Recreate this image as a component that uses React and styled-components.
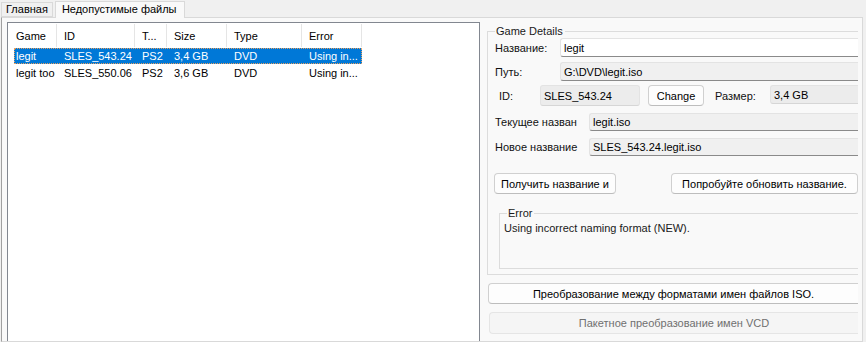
import styled, { createGlobalStyle } from "styled-components";

const GlobalStyle = createGlobalStyle`
  html, body {
    margin: 0;
    padding: 0;
    background: #f0f0f0;
  }
  body {
    font-family: "Liberation Sans", Arial, sans-serif;
    font-size: 11px;
    color: #000;
  }
`;

const columns = [
  { title: "Game", width: 49 },
  { title: "ID", width: 78 },
  { title: "T...", width: 32 },
  { title: "Size", width: 60 },
  { title: "Type", width: 75 },
  { title: "Error", width: 60 },
];

const games = [
  ["legit", "SLES_543.24", "PS2", "3,4 GB", "DVD", "Using in..."],
  ["legit too", "SLES_550.06", "PS2", "3,6 GB", "DVD", "Using in..."],
];

const App = () => {
  return (
    <Window>
      <GlobalStyle />
      <TabStrip>
        <Tab>Главная</Tab>
        <Tab $active>Недопустимые файлы</Tab>
      </TabStrip>
      <TabPanel>
        <ListView>
          <HeaderRow>
            {columns.map((c) => (
              <HeaderCell key={c.title} $width={c.width}>
                {c.title}
              </HeaderCell>
            ))}
          </HeaderRow>
          {games.map((g, i) => (
            <ItemRow key={g[1]} $selected={i === 0}>
              {g.map((v, j) => (
                <ItemCell key={j} $width={j === 0 ? 43 : columns[j].width} $first={j === 0}>
                  {v}
                </ItemCell>
              ))}
            </ItemRow>
          ))}
        </ListView>

        <Side>
          <GroupBox>
            <Legend $offset={1}>Game Details</Legend>
            <FieldRow $h={19}>
              <Label $width={66}>Название:</Label>
              <Field $white>legit</Field>
            </FieldRow>
            <FieldRow $h={19} $top={5}>
              <Label $width={66}>Путь:</Label>
              <Field>G:\DVD\legit.iso</Field>
            </FieldRow>
            <FieldRow $h={21} $top={4}>
              <Label $width={46} $pad={4}>ID:</Label>
              <Field $width={100} $plain>SLES_543.24</Field>
              <Button $width={56} $left={8}>Change</Button>
              <Label $width={66} $pad={10}>Размер:</Label>
              <Field $plain $top>3,4 GB</Field>
            </FieldRow>
            <FieldRow $h={18} $top={7}>
              <Label $width={95}>Текущее назван</Label>
              <Field>legit.iso</Field>
            </FieldRow>
            <FieldRow $h={18} $top={7}>
              <Label $width={95}>Новое название</Label>
              <Field>SLES_543.24.legit.iso</Field>
            </FieldRow>
            <ButtonRow>
              <Button $width={122}>Получить название и</Button>
              <Button $width={187}>Попробуйте обновить название.</Button>
            </ButtonRow>
            <ErrorBox>
              <Legend $offset={3}>Error</Legend>
              <ErrorText>Using incorrect naming format (NEW).</ErrorText>
            </ErrorBox>
          </GroupBox>
          <WideButton>Преобразование между форматами имен файлов ISO.</WideButton>
          <WideButton disabled>Пакетное преобразование имен VCD</WideButton>
        </Side>
      </TabPanel>
    </Window>
  );
};

const Window = styled.div`
  width: 866px;
  height: 342px;
  overflow: hidden;
  display: flex;
  flex-direction: column;
`;

const TabStrip = styled.div`
  height: 17px;
  display: flex;
  align-items: flex-end;
  padding-left: 1px;
  gap: 2px;
`;

const Tab = styled.div`
  position: relative;
  z-index: 1;
  box-sizing: border-box;
  height: ${(p) => (p.$active ? "17px" : "15px")};
  margin-bottom: ${(p) => (p.$active ? "-1px" : "0")};
  padding: ${(p) => (p.$active ? "1px 7px 0 6px" : "0 4px 0 4px")};
  background: ${(p) => (p.$active ? "#f9f9f9" : "#f0f0f0")};
  border: 1px solid #d9d9d9;
  border-bottom: ${(p) => (p.$active ? "none" : "1px solid #d9d9d9")};
  line-height: 13px;
  white-space: nowrap;
`;

const TabPanel = styled.div`
  flex: 1;
  display: flex;
  align-items: flex-start;
  width: 862px;
  margin-left: 1px;
  box-sizing: border-box;
  background: #f9f9f9;
  border: 1px solid #d9d9d9;
  border-left-color: #a0a0a0;
  padding: 4px 4px 0 5px;
  gap: 7px;
  overflow: hidden;
`;

const ListView = styled.div`
  width: 473px;
  height: 340px;
  flex-shrink: 0;
  box-sizing: border-box;
  background: #fff;
  border: 1px solid #828790;
`;

const HeaderRow = styled.div`
  display: flex;
  height: 23px;
  margin: 1px 0 1px;
`;

const HeaderCell = styled.div`
  width: ${(p) => p.$width}px;
  box-sizing: border-box;
  padding-left: ${(p) => (p.$width === 49 ? 8 : 7)}px;
  border-right: 1px solid #e5e5e5;
  display: flex;
  align-items: center;
  padding-top: 1px;
  white-space: nowrap;
  overflow: hidden;
`;

const ItemRow = styled.div`
  display: flex;
  height: 16px;
  margin: 0 0 1px 6px;
  width: fit-content;
  box-sizing: border-box;
  background: ${(p) => (p.$selected ? "#0078d7" : "transparent")};
  color: ${(p) => (p.$selected ? "#fff" : "#000")};
  outline: ${(p) => (p.$selected ? "1px dotted #e8a060" : "none")};
  outline-offset: -1px;
`;

const ItemCell = styled.div`
  width: ${(p) => p.$width}px;
  box-sizing: border-box;
  padding-left: ${(p) => (p.$first ? 2 : 7)}px;
  line-height: 16px;
  white-space: nowrap;
  overflow: hidden;
`;

const Side = styled.div`
  width: 371px;
  flex-shrink: 0;
  display: flex;
  flex-direction: column;
  overflow: hidden;
`;

const GroupBox = styled.fieldset`
  margin: 3px 0 0;
  min-width: 0;
  padding: 0 0 5px 6px;
  border: 1px solid #dcdcdc;
  border-right: none;
  display: flex;
  flex-direction: column;
`;

const Legend = styled.legend`
  margin-left: ${(p) => p.$offset}px;
  padding: 0 2px 0 1px;
  line-height: 13px;
  color: #1a1a1a;
`;

const FieldRow = styled.div`
  display: flex;
  align-items: center;
  height: ${(p) => p.$h}px;
  margin-top: ${(p) => p.$top || 0}px;
`;

const Label = styled.div`
  width: ${(p) => p.$width}px;
  flex-shrink: 0;
  box-sizing: border-box;
  padding-left: ${(p) => 1 + (p.$pad || 0)}px;
  white-space: nowrap;
  overflow: hidden;
  color: #111;
`;

const Field = styled.div`
  ${(p) => (p.$width ? `width: ${p.$width}px; flex-shrink: 0;` : "flex: 1;")}
  align-self: ${(p) => (p.$top ? "flex-start" : "stretch")};
  height: ${(p) => (p.$top ? "19px" : "auto")};
  box-sizing: border-box;
  display: flex;
  align-items: center;
  padding: 0 3px;
  background: ${(p) => (p.$white ? "#fff" : p.$plain ? "#ececec" : "#f0f0f0")};
  border: 1px solid #e3e3e3;
  border-bottom-color: ${(p) => (p.$plain ? "#d6d6d6" : "#8a8a8a")};
  border-right: ${(p) => (p.$width ? "1px solid #e3e3e3" : "none")};
  border-radius: ${(p) => (p.$width ? "3px" : "3px 0 0 3px")};
  white-space: nowrap;
  overflow: hidden;
`;

const Button = styled.button`
  width: ${(p) => p.$width}px;
  flex-shrink: 0;
  height: 21px;
  margin-left: ${(p) => p.$left || 0}px;
  padding: 0;
  font: inherit;
  color: #000;
  background: #fdfdfd;
  border: 1px solid #d0d0d0;
  border-bottom-color: #bdbdbd;
  border-radius: 4px;
  white-space: nowrap;
  overflow: hidden;
`;

const ButtonRow = styled.div`
  display: flex;
  justify-content: space-between;
  margin-top: 17px;
`;

const ErrorBox = styled.fieldset`
  margin: 13px 0 0 5px;
  min-width: 0;
  padding: 2px 0 0 4px;
  border: 1px solid #dcdcdc;
  border-right: none;
`;

const ErrorText = styled.div`
  height: 46px;
  line-height: 13px;
  color: #1a1a1a;
`;

const WideButton = styled.button`
  height: ${(p) => (p.disabled ? 22 : 21)}px;
  margin: 8px 0 0 ${(p) => (p.disabled ? 2 : 1)}px;
  padding: 0;
  font: inherit;
  color: ${(p) => (p.disabled ? "#707070" : "#000")};
  background: ${(p) => (p.disabled ? "#f5f5f5" : "#fdfdfd")};
  border: 1px solid ${(p) => (p.disabled ? "#e5e5e5" : "#d0d0d0")};
  border-bottom-color: ${(p) => (p.disabled ? "#e5e5e5" : "#bdbdbd")};
  border-right: none;
  border-radius: 4px 0 0 4px;
  white-space: nowrap;
`;

export default App;
